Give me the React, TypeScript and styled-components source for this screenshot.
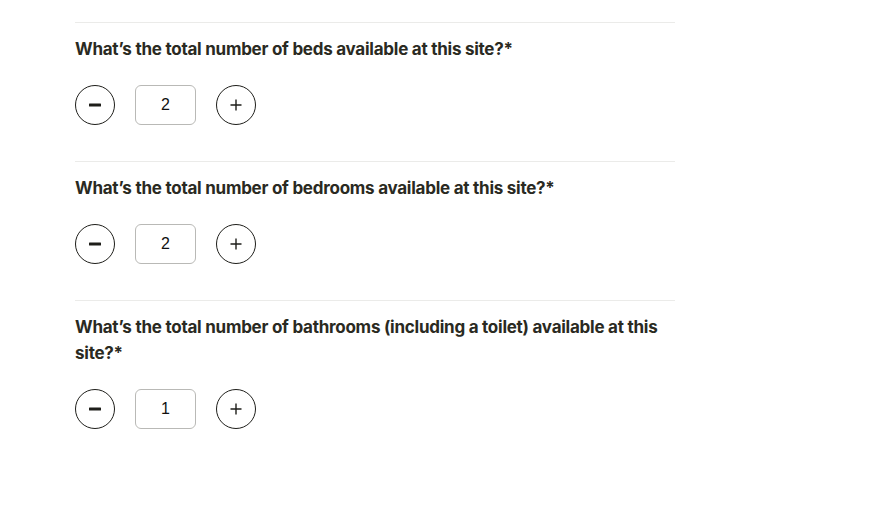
import React, { useState } from 'react';
import styled, { createGlobalStyle } from 'styled-components';

const GlobalStyle = createGlobalStyle`
	body {
		margin: 0;
		background: #ffffff;
		font-family: 'Inter', 'Liberation Sans', sans-serif;
		color: #2a2a22;
	}
`;

type Question = {
	id: string;
	label: string;
	initial: number;
};

const QUESTIONS: Question[] = [
	{ id: 'beds', label: 'What’s the total number of beds available at this site?*', initial: 2 },
	{ id: 'bedrooms', label: 'What’s the total number of bedrooms available at this site?*', initial: 2 },
	{
		id: 'bathrooms',
		label: 'What’s the total number of bathrooms (including a toilet) available at this site?*',
		initial: 1,
	},
];

const MinusIcon = () => (
	<svg width="14" height="14" viewBox="0 0 14 14">
		<rect x="1" y="5.5" width="12" height="3" rx="0.5" fill="#1e1e1a" />
	</svg>
);

const PlusIcon = () => (
	<svg width="14" height="14" viewBox="0 0 14 14">
		<path d="M7 1.5v11M1.5 7h11" stroke="#1e1e1a" strokeWidth="1.4" fill="none" />
	</svg>
);

const Counter = ({ question }: { question: Question }): JSX.Element => {
	const [value, setValue] = useState(question.initial);

	return (
		<StyledSection>
			<StyledLabel htmlFor={question.id}>{question.label}</StyledLabel>
			<StyledStepper>
				<StyledRoundButton type="button" aria-label="Decrease" onClick={() => setValue(Math.max(0, value - 1))}>
					<MinusIcon />
				</StyledRoundButton>
				<StyledInput id={question.id} value={value} onChange={e => setValue(Number(e.target.value) || 0)} />
				<StyledRoundButton type="button" aria-label="Increase" onClick={() => setValue(value + 1)}>
					<PlusIcon />
				</StyledRoundButton>
			</StyledStepper>
		</StyledSection>
	);
};

const App = (): JSX.Element => (
	<>
		<GlobalStyle />
		<StyledPage>
			{QUESTIONS.map(q => (
				<Counter key={q.id} question={q} />
			))}
		</StyledPage>
	</>
);

export default App;

const StyledPage = styled.main`
	width: 600px;
	padding: 22px 0 0 75px;
	display: flex;
	flex-direction: column;
`;

const StyledSection = styled.section`
	border-top: 1px solid #ebebe9;
	padding: 13px 0 36px;
	display: flex;
	flex-direction: column;
	gap: 23px;
`;

const StyledLabel = styled.label`
	font-size: 17px;
	line-height: 26px;
	font-weight: 700;
	letter-spacing: -0.25px;
	color: #2a2a22;
`;

const StyledStepper = styled.div`
	display: flex;
	align-items: center;
	gap: 20px;
`;

const StyledRoundButton = styled.button`
	width: 40px;
	height: 40px;
	border-radius: 50%;
	border: 1.5px solid #1e1e1a;
	background: #fff;
	padding: 0;
	display: flex;
	align-items: center;
	justify-content: center;
	cursor: pointer;
`;

const StyledInput = styled.input`
	box-sizing: border-box;
	width: 61px;
	height: 40px;
	border: 1px solid #b9b9b6;
	border-radius: 6px;
	text-align: center;
	font-family: 'Liberation Sans', Arial, sans-serif;
	font-size: 16px;
	color: #111;
	outline: none;
`;
